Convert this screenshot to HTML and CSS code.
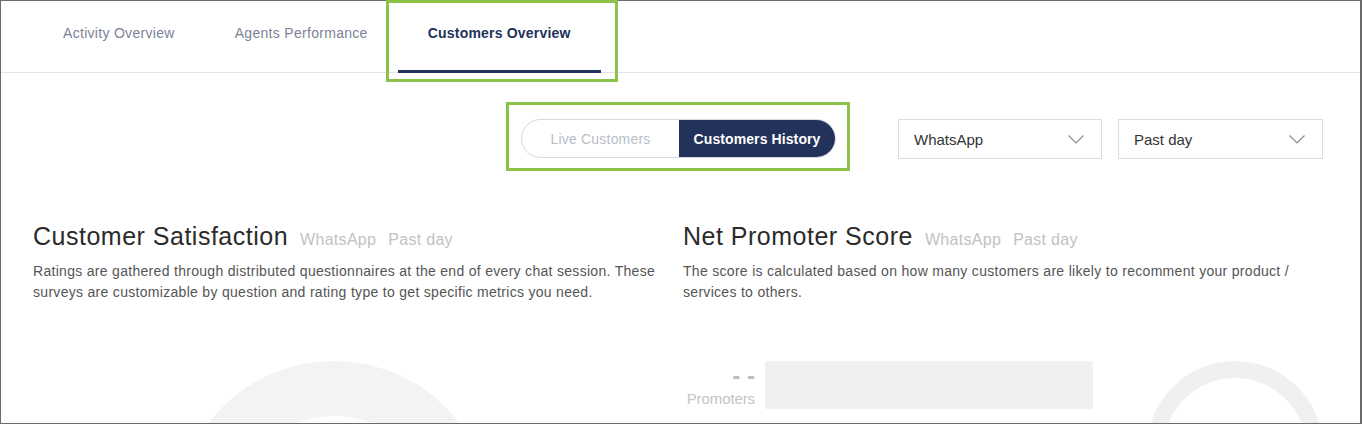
FILE: index.html
```html
<!DOCTYPE html>
<html lang="en">
<head>
<meta charset="utf-8">
<title>Customers Overview</title>
<link rel="stylesheet" href="styles.css">
</head>
<body>
<div class="frame">
  <nav class="tabs">
    <a class="tab">Activity Overview</a>
    <a class="tab">Agents Performance</a>
    <a class="tab tab-active">Customers Overview<span class="highlight hl-tab"></span></a>
  </nav>

  <div class="filters">
    <div class="toggle">
      <span class="toggle-opt">Live Customers</span>
      <span class="toggle-opt toggle-on">Customers History</span>
      <span class="highlight hl-toggle"></span>
    </div>
    <div class="select select-first">
      <span>WhatsApp</span>
      <svg class="chev" width="16" height="9" viewBox="0 0 16 9"><path d="M0.5 0.5 L8 8 L15.5 0.5" fill="none" stroke="#8c8c8c" stroke-width="1.2"/></svg>
    </div>
    <div class="select">
      <span>Past day</span>
      <svg class="chev" width="16" height="9" viewBox="0 0 16 9"><path d="M0.5 0.5 L8 8 L15.5 0.5" fill="none" stroke="#8c8c8c" stroke-width="1.2"/></svg>
    </div>
  </div>

  <div class="sections">
    <section class="card">
      <h2 class="card-title">Customer Satisfaction<span class="meta">WhatsApp</span><span class="meta">Past day</span></h2>
      <p class="desc">Ratings are gathered through distributed questionnaires at the end of every chat session. These surveys are customizable by question and rating type to get specific metrics you need.</p>
      <div class="chart chart-csat">
        <svg width="316" height="62" viewBox="0 0 316 62"><circle cx="158" cy="158" r="130.5" fill="none" stroke="#f3f3f3" stroke-width="55"/></svg>
      </div>
    </section>
    <section class="card">
      <h2 class="card-title">Net Promoter Score<span class="meta">WhatsApp</span><span class="meta">Past day</span></h2>
      <p class="desc">The score is calculated based on how many customers are likely to recomment your product / services to others.</p>
      <div class="chart chart-nps">
        <div class="nps-label">
          <span class="nps-value">- -</span>
          <span class="nps-name">Promoters</span>
        </div>
        <div class="nps-bar"></div>
        <svg class="nps-donut" width="176" height="62" viewBox="0 0 176 62"><circle cx="88" cy="88" r="79.5" fill="none" stroke="#f0f0f0" stroke-width="17"/></svg>
      </div>
    </section>
  </div>
</div>
</body>
</html>
```

FILE: styles.css
```css
* { box-sizing: border-box; }
html, body { margin: 0; padding: 0; }
body {
  font-family: "Liberation Sans", Arial, sans-serif;
  background: #fff;
}

.frame {
  width: 1362px;
  height: 424px;
  border: 1px solid #6b6b6b;
  border-right-width: 2px;
  background: #fff;
}

/* Tabs */
.tabs {
  display: flex;
  height: 72px;
  border-bottom: 1px solid #e3e3e3;
  padding-left: 32px;
}
.tab {
  position: relative;
  height: 72px;
  padding: 22px 30px 0;
  font-size: 14px;
  line-height: 20px;
  letter-spacing: 0.3px;
  color: #7b8496;
  white-space: nowrap;
}
.tab-active {
  color: #22325a;
  font-weight: bold;
  letter-spacing: 0.2px;
  border-bottom: 3px solid #22325a;
}

.highlight {
  position: absolute;
  border: 3px solid #8bc34a;
  pointer-events: none;
}
.hl-tab {
  left: -12px;
  right: -17px;
  top: -1px;
  bottom: -12px;
}

/* Filters */
.filters {
  display: flex;
  justify-content: flex-end;
  align-items: flex-start;
  margin-top: 46px;
  padding-right: 37px;
}
.toggle {
  position: relative;
  display: flex;
  height: 39px;
  border: 1px solid #d6d9e1;
  border-radius: 20px;
  margin-right: 62px;
}
.toggle-opt {
  width: 157px;
  display: flex;
  align-items: center;
  justify-content: center;
  font-size: 14px;
  letter-spacing: 0.2px;
  color: #b9bdca;
}
.toggle-on {
  width: 156px;
  background: #22325a;
  color: #fff;
  font-weight: bold;
  letter-spacing: 0.1px;
  border-radius: 0 19px 19px 0;
}
.hl-toggle {
  left: -16px;
  right: -15px;
  top: -18px;
  bottom: -14px;
}

.select {
  width: 205px;
  height: 40px;
  border: 1px solid #d9dce2;
  display: flex;
  align-items: center;
  justify-content: space-between;
  padding: 0 17px 0 15px;
  font-size: 15px;
  color: #333;
  margin-left: 16px;
}
.select-first { width: 204px; margin-left: 0; }
.chev { display: block; }

/* Sections */
.sections {
  display: grid;
  grid-template-columns: 650px 650px;
  padding-left: 32px;
  margin-top: 62px;
}
.card-title {
  margin: 0;
  display: flex;
  align-items: baseline;
  font-size: 25px;
  line-height: 30px;
  font-weight: normal;
  color: #2b2b2b;
  letter-spacing: 0.5px;
  white-space: nowrap;
}
.meta {
  font-size: 16px;
  color: #c2c2c2;
  margin-left: 12px;
  letter-spacing: 0.3px;
}
.desc {
  margin: 6px 0 0;
  max-width: 630px;
  font-size: 14px;
  line-height: 21px;
  color: #555;
  letter-spacing: 0.3px;
}

.chart {
  display: flex;
  height: 62px;
  margin-top: 58px;
}
.chart svg { display: block; }
.chart-csat { padding-left: 143px; }

.chart-nps {
  align-items: flex-start;
  padding-right: 10px;
}
.nps-label {
  width: 72px;
  display: flex;
  flex-direction: column;
  align-items: flex-end;
  padding-top: 3px;
}
.nps-value {
  font-size: 24px;
  line-height: 24px;
  font-weight: bold;
  color: #bdbdbd;
}
.nps-name {
  margin-top: 2px;
  font-size: 15px;
  line-height: 18px;
  color: #c4c4c4;
  letter-spacing: -0.1px;
}
.nps-bar {
  width: 328px;
  height: 48px;
  margin-left: 10px;
  background: #f0f0f0;
  border-radius: 2px;
}
.nps-donut { margin-left: auto; }
```
